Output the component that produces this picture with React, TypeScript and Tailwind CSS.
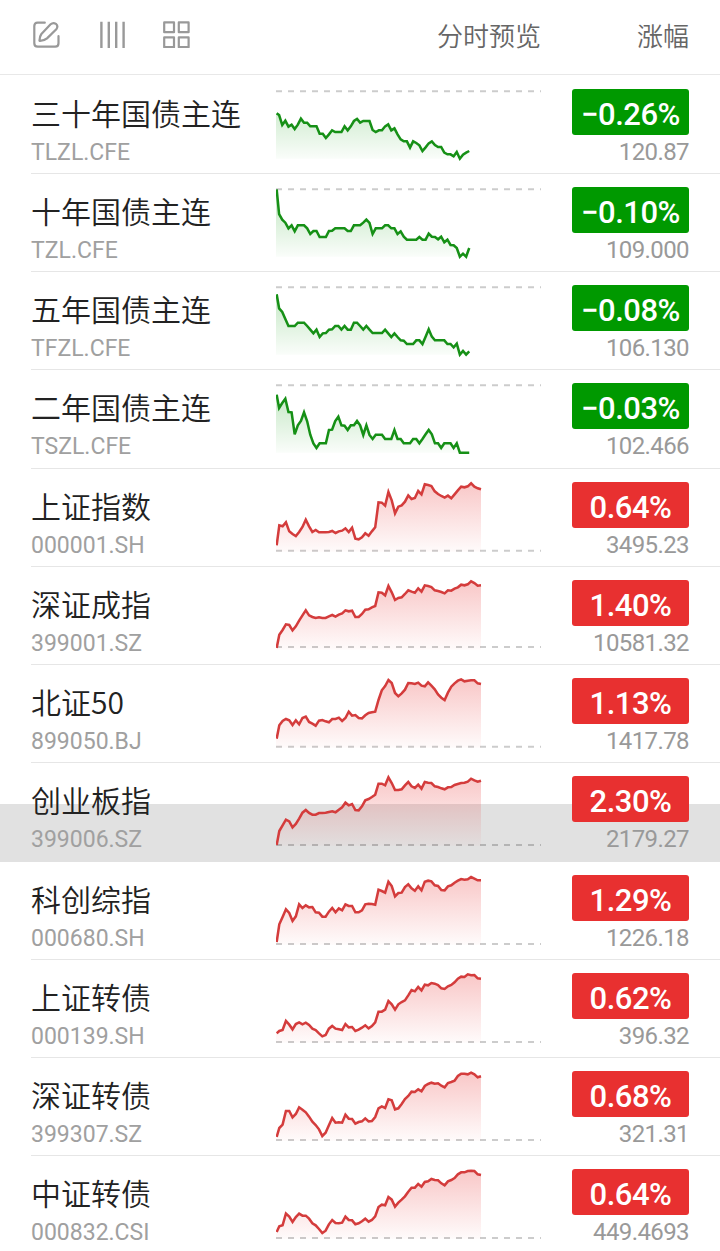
import React from 'react'
import { clsx } from 'clsx'

interface Quote {
  name: string
  code: string
  change: string
  price: string
  up: boolean
  origin: number
  base: number
  points: number[]
  pressed?: boolean
}

const quotes: Quote[] = [
  {
    name: '三十年国债主连', code: 'TLZL.CFE', change: '−0.26%', price: '120.87', up: false, origin: 0, base: 34,
    points: [100, 105, 135, 122, 140, 134, 147, 134, 116, 128, 128, 139, 139, 139, 161, 161, 174, 163, 151, 156, 156, 156, 139, 151, 139, 123, 117, 128, 123, 123, 123, 150, 156, 151, 151, 139, 133, 151, 145, 163, 178, 184, 184, 203, 184, 189, 196, 213, 202, 190, 184, 195, 201, 201, 218, 223, 223, 229, 216, 236, 224, 218, 213],
  },
  {
    name: '十年国债主连', code: 'TZL.CFE', change: '−0.10%', price: '109.000', up: false, origin: 0, base: 34,
    points: [34, 108, 125, 134, 151, 142, 160, 142, 142, 142, 151, 168, 159, 159, 177, 177, 177, 159, 158, 151, 151, 151, 151, 159, 159, 142, 142, 142, 134, 125, 135, 168, 151, 151, 151, 142, 142, 151, 151, 168, 160, 176, 185, 185, 185, 185, 177, 185, 185, 167, 176, 177, 184, 176, 193, 185, 201, 202, 210, 236, 227, 236, 210],
  },
  {
    name: '五年国债主连', code: 'TFZL.CFE', change: '−0.08%', price: '106.130', up: false, origin: 0, base: 34,
    points: [55, 97, 108, 129, 150, 150, 150, 140, 140, 140, 150, 161, 172, 161, 183, 172, 171, 161, 160, 150, 150, 161, 150, 161, 161, 140, 140, 150, 161, 150, 161, 171, 171, 171, 171, 161, 172, 183, 172, 183, 193, 194, 204, 204, 204, 193, 193, 204, 182, 160, 182, 193, 193, 193, 193, 204, 204, 214, 203, 236, 225, 236, 226],
  },
  {
    name: '二年国债主连', code: 'TSZL.CFE', change: '−0.03%', price: '102.466', up: false, origin: 0, base: 34,
    points: [62, 102, 87, 74, 114, 115, 181, 154, 141, 115, 142, 182, 208, 222, 208, 208, 208, 168, 167, 141, 128, 154, 155, 168, 154, 154, 141, 154, 183, 154, 183, 195, 182, 182, 182, 195, 195, 195, 168, 195, 195, 208, 208, 208, 195, 195, 208, 195, 181, 168, 181, 208, 208, 222, 208, 208, 208, 222, 208, 236, 236, 236, 236],
  },
  {
    name: '上证指数', code: '000001.SH', change: '0.64%', price: '3495.23', up: true, origin: 3, base: 236,
    points: [220, 160, 163, 151, 178, 186, 192, 180, 165, 143, 163, 180, 174, 181, 181, 181, 180, 177, 183, 178, 176, 169, 180, 167, 200, 202, 196, 184, 191, 178, 166, 91, 92, 101, 60, 85, 124, 104, 100, 89, 70, 81, 78, 57, 67, 37, 39, 42, 58, 66, 72, 77, 71, 79, 67, 55, 44, 46, 43, 34, 44, 49, 52],
  },
  {
    name: '深证成指', code: '399001.SZ', change: '1.40%', price: '10581.32', up: true, origin: 297, base: 525,
    points: [528, 488, 474, 457, 459, 475, 463, 446, 430, 415, 430, 435, 438, 436, 438, 438, 433, 429, 434, 428, 424, 415, 418, 416, 435, 435, 426, 413, 412, 406, 402, 361, 362, 370, 342, 361, 384, 378, 376, 366, 355, 359, 362, 349, 359, 340, 342, 345, 355, 357, 360, 364, 355, 356, 350, 346, 338, 340, 337, 328, 333, 341, 340],
  },
  {
    name: '北证50', code: '899050.BJ', change: '1.13%', price: '1417.78', up: true, origin: 3, base: 236,
    points: [212, 172, 159, 153, 157, 171, 157, 169, 150, 146, 162, 167, 173, 158, 156, 160, 163, 153, 153, 149, 159, 150, 131, 143, 141, 150, 151, 142, 135, 133, 131, 96, 67, 54, 36, 45, 75, 85, 76, 65, 45, 46, 48, 44, 53, 55, 43, 53, 64, 79, 89, 96, 74, 56, 46, 38, 34, 40, 38, 37, 37, 46, 48],
  },
  {
    name: '创业板指', code: '399006.SZ', change: '2.30%', price: '2179.27', up: true, origin: 297, base: 531, pressed: true,
    points: [531, 489, 472, 455, 460, 478, 468, 452, 434, 426, 435, 440, 440, 435, 435, 434, 432, 430, 433, 425, 418, 404, 412, 408, 426, 427, 415, 397, 393, 387, 380, 347, 347, 352, 328, 345, 366, 366, 364, 352, 342, 355, 360, 350, 362, 342, 344, 345, 355, 357, 361, 364, 358, 357, 351, 348, 345, 344, 341, 332, 337, 341, 338],
  },
  {
    name: '科创综指', code: '000680.SH', change: '1.29%', price: '1226.18', up: true, origin: 0, base: 234,
    points: [228, 175, 153, 130, 141, 165, 151, 115, 126, 118, 124, 123, 139, 140, 152, 152, 137, 126, 139, 127, 133, 115, 120, 120, 139, 139, 133, 115, 113, 114, 116, 71, 75, 80, 47, 60, 91, 81, 80, 63, 55, 67, 74, 61, 73, 47, 44, 46, 58, 60, 72, 73, 61, 58, 50, 44, 39, 41, 40, 33, 38, 43, 43],
  },
  {
    name: '上证转债', code: '000139.SH', change: '0.62%', price: '396.32', up: true, origin: 294, base: 528,
    points: [502, 495, 492, 465, 476, 490, 474, 469, 475, 470, 477, 488, 492, 502, 511, 507, 488, 480, 488, 490, 492, 474, 484, 483, 495, 491, 485, 478, 487, 480, 469, 437, 437, 431, 405, 415, 431, 415, 408, 403, 388, 372, 376, 363, 373, 356, 358, 351, 353, 357, 367, 369, 361, 357, 349, 338, 332, 333, 325, 328, 327, 337, 338],
  },
  {
    name: '深证转债', code: '399307.SZ', change: '0.68%', price: '321.31', up: true, origin: 0, base: 234,
    points: [225, 198, 188, 147, 147, 166, 156, 136, 143, 151, 164, 179, 189, 202, 222, 212, 190, 168, 182, 181, 182, 158, 170, 171, 185, 180, 178, 169, 178, 177, 165, 139, 133, 138, 112, 115, 142, 139, 126, 111, 102, 89, 90, 82, 88, 72, 66, 62, 65, 64, 71, 76, 63, 60, 56, 42, 35, 35, 37, 32, 37, 46, 43],
  },
  {
    name: '中证转债', code: '000832.CSI', change: '0.64%', price: '449.4693', up: true, origin: 294, base: 528,
    points: [510, 493, 490, 455, 464, 480, 465, 455, 461, 461, 470, 484, 490, 501, 513, 506, 487, 474, 483, 484, 482, 464, 474, 475, 487, 484, 478, 470, 479, 474, 463, 435, 428, 430, 405, 413, 434, 422, 413, 403, 389, 377, 377, 366, 374, 360, 358, 351, 354, 355, 364, 370, 358, 354, 348, 337, 331, 331, 327, 326, 327, 337, 339],
  },
]

// The chart canvas is 795x282 units, three units per pixel
const Sparkline: React.FC<{ quote: Quote }> = ({ quote }) => {
  const { points, up, origin, base, code } = quote
  const step = up ? 9.92 : 9.35
  const color = up ? '#d43c3c' : '#169016'
  const coords = points.map((p, i) => `${(i === 0 ? 2 : i * step).toFixed(1)},${p - origin}`)
  const endX = ((points.length - 1) * step).toFixed(1)
  const zero = base - origin

  return (
    <svg className="mt-1 h-[94px] w-[265px] shrink-0" viewBox="0 0 795 282" fill="none">
      <defs>
        <linearGradient id={`fill-${code}`} gradientUnits="userSpaceOnUse" x1="0" y1="30" x2="0" y2="236">
          <stop offset="0" stopColor={up ? '#e83030' : '#009900'} stopOpacity={up ? 0.27 : 0.26} />
          <stop offset="1" stopColor={up ? '#e83030' : '#009900'} stopOpacity="0.02" />
        </linearGradient>
      </defs>
      <path d={`M0,236 L0,${points[0] - origin} L${coords.join(' L')} L${endX},236 Z`} fill={`url(#fill-${code})`} />
      <line x1="0" y1={zero} x2="795" y2={zero} stroke="#000" strokeOpacity="0.2" strokeWidth="6" strokeDasharray="18 18" />
      <polyline points={coords.join(' ')} stroke={color} strokeWidth="7.6" strokeLinejoin="miter" />
    </svg>
  )
}

const QuoteRow: React.FC<{ quote: Quote }> = ({ quote }) => (
  <li className="relative h-[98.25px]">
    {quote.pressed && <div className="absolute inset-x-0 top-[41px] bottom-0 bg-[#e1e1e1]" />}
    <div
      className={clsx(
        'relative ml-[31px] flex h-full border-b pr-[31px]',
        quote.pressed ? 'border-[#e1e1e1]' : 'border-[#e6e6e6]'
      )}
    >
      <div className="w-[245px] shrink-0 pt-4 whitespace-nowrap">
        <div className="h-11 font-['Noto_Sans_CJK_SC',sans-serif] text-[30px] leading-[41px] font-[350] text-[#222]">
          {quote.name}
        </div>
        <div className="h-8 pt-px font-['Roboto',sans-serif] text-[23px] leading-8 text-[#a0a0a0]">{quote.code}</div>
      </div>
      <Sparkline quote={quote} />
      <div className="ml-[31px] w-[117px] shrink-0 pt-[13px] text-right font-['Roboto',sans-serif] whitespace-nowrap">
        <div
          className={clsx(
            'h-[46px] rounded-[3px] text-center text-[31px] leading-[51px] font-medium tracking-[-0.5px] text-white',
            quote.up ? 'bg-[#e83030]' : 'bg-[#009900]'
          )}
        >
          {quote.change}
        </div>
        <div className="flex h-8 justify-end text-2xl leading-[34px] tracking-[-0.6px] text-[#999]">{quote.price}</div>
      </div>
    </div>
  </li>
)

const App: React.FC = () => {
  return (
    <div className="h-[1251px] w-[720px] overflow-hidden bg-white">
      <header className="flex h-[75px] items-start border-b border-[#e8e8e8] pr-[31px] pl-8 text-[#999]">
        <svg className="mt-5 h-7 w-7" viewBox="0 0 28 28" fill="none" stroke="currentColor" strokeWidth="2.2" strokeLinecap="round" strokeLinejoin="round">
          <path d="M12.8 2.7H5.6Q2.3 2.7 2.3 6V23.2Q2.3 26.6 5.7 26.6H23.2Q26.5 26.6 26.5 23.2V16.2" />
          <path d="M7.5 20.8Q7.3 17 9.4 14L18.6 4.3Q21.2 2 23.9 3.8Q26.6 6.3 24.3 9.2L15 18.4Q12 21 7.5 20.8Z" />
        </svg>
        <svg className="mt-5 ml-[38px] h-7 w-7" viewBox="0 0 28 28" stroke="currentColor" strokeWidth="2.4">
          <path d="M3.4 1.8V28M10.8 1.8V28M18.2 1.8V28M25.6 1.8V28" />
        </svg>
        <svg className="mt-5 ml-9 h-7 w-7" viewBox="0 0 28 28" fill="none" stroke="currentColor" strokeWidth="2.2" strokeLinejoin="round">
          <rect x="2.2" y="2.4" width="9.8" height="9.8" />
          <rect x="16.8" y="2.4" width="9.8" height="9.8" />
          <rect x="2.2" y="17.4" width="9.8" height="9.8" />
          <rect x="16.8" y="17.4" width="9.8" height="9.8" />
        </svg>
        <div className="ml-auto flex pt-4 font-['Noto_Sans_CJK_SC',sans-serif] text-[26px] leading-[38px] font-[350] text-[#666]">
          <span>分时预览</span>
          <span className="ml-24">涨幅</span>
        </div>
      </header>
      <ul className="pt-[0.7px]">
        {quotes.map((quote) => (
          <QuoteRow key={quote.code} quote={quote} />
        ))}
      </ul>
    </div>
  )
}

export default App
